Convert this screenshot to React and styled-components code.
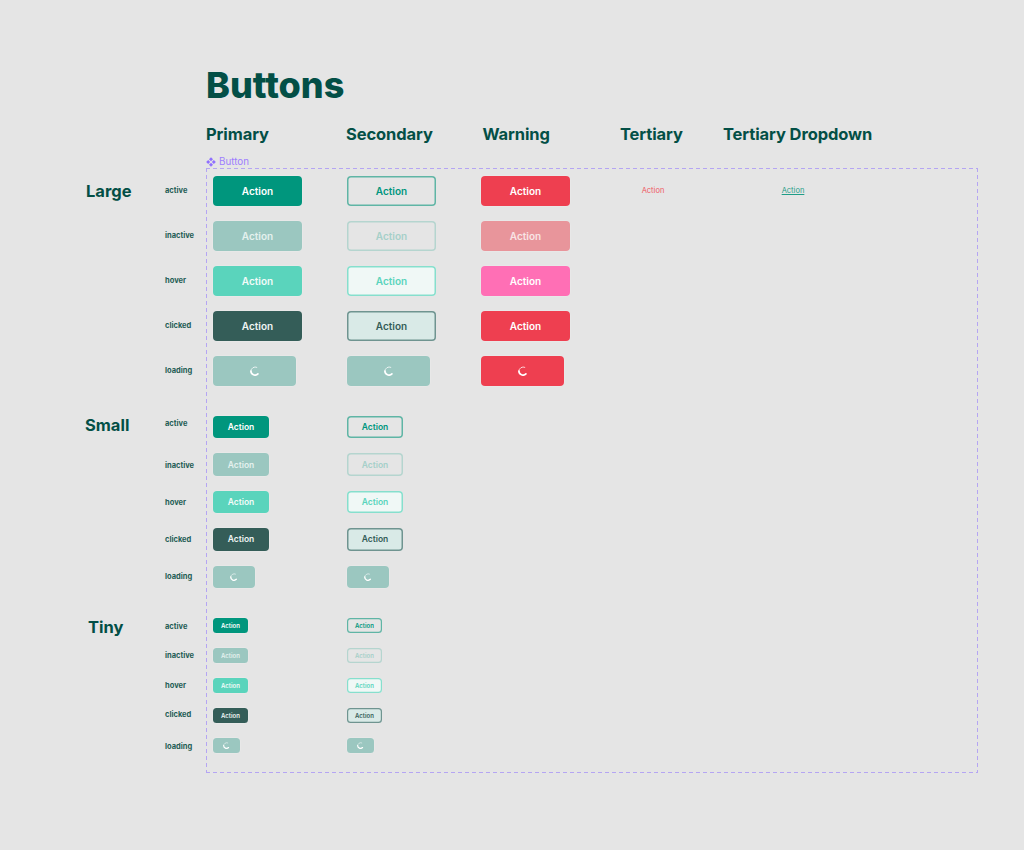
import React from 'react';
import styled, { createGlobalStyle } from 'styled-components';

const GlobalStyle = createGlobalStyle`
  html, body {
    margin: 0;
    padding: 0;
    background: #e5e5e5;
  }
`;

const sizes = {
  large: { height: 30, width: 89, loadingWidth: 83, font: 10, radius: 4, spinner: 10, line: 1.5 },
  small: { height: 22.4, width: 56, loadingWidth: 42, font: 8.5, radius: 4, spinner: 8, line: 1.5 },
  tiny: { height: 15, width: 35, loadingWidth: 27, font: 6, radius: 3.5, spinner: 7, line: 1.2 },
};

const skins = {
  primary: {
    active: { bg: '#00967d', text: '#fff' },
    inactive: { bg: '#9bc7c0', text: '#e4f1ee' },
    hover: { bg: '#5ad4bc', text: '#f2fbf9' },
    clicked: { bg: '#345d58', text: '#f0f5f4' },
    loading: { bg: '#9bc7c0', text: '#fff' },
  },
  secondary: {
    active: { bg: 'transparent', line: '#5fb5a5', text: '#00967d' },
    inactive: { bg: 'transparent', line: '#b5d5cf', text: '#a5d0c9' },
    hover: { bg: '#f0f8f6', line: '#86dfcd', text: '#5ad4bc' },
    clicked: { bg: '#d9eae7', line: '#6f9490', text: '#345d58' },
    loading: { bg: '#9bc7c0', text: '#fff' },
  },
  warning: {
    active: { bg: '#ee3f50', text: '#fff' },
    inactive: { bg: '#e8959b', text: '#f8e4e5' },
    hover: { bg: '#ff6fb5', text: '#fff' },
    clicked: { bg: '#ee3f50', text: '#fff' },
    loading: { bg: '#ee3f50', text: '#fff' },
  },
};

const Page = styled.div`
  width: 1024px;
  height: 850px;
  padding: 65px 0 0 85px;
  box-sizing: border-box;
  background: #e5e5e5;
  color: #034f46;
  font-family: Inter, "Liberation Sans", sans-serif;
  overflow: hidden;
`;

const Title = styled.h1`
  margin: 0 0 0 121px;
  height: 40px;
  font-size: 36px;
  line-height: 40px;
  font-weight: 800;
`;

const Columns = styled.div`
  display: flex;
  margin: 19px 0 0 121px;
  height: 20px;
`;

const ColumnTitle = styled.h2`
  margin: 0;
  width: ${p => p.$width}px;
  flex: none;
  font-size: 16.5px;
  line-height: 20px;
  font-weight: 700;
  letter-spacing: -0.1px;
  white-space: nowrap;
`;

const FrameLabel = styled.div`
  display: flex;
  align-items: center;
  gap: 3px;
  margin: 11px 0 0 121px;
  height: 13px;
  color: #9d7dff;
  font-size: 9.8px;
  line-height: 13px;
`;

const Board = styled.div`
  display: flex;
`;

const Sidebar = styled.div`
  width: 121px;
  flex: none;
  padding-top: 8px;
  display: flex;
  flex-direction: column;
  gap: 30px;
`;

const SideGroup = styled.div`
  display: flex;
`;

const SizeName = styled.div`
  width: 80px;
  flex: none;
  box-sizing: border-box;
  padding-left: ${p => p.$inset}px;
  height: ${p => p.$height}px;
  line-height: ${p => p.$height}px;
  font-size: 16.5px;
  font-weight: 700;
  transform: translateY(${p => p.$nudge}px);
`;

const StateList = styled.div`
  display: flex;
  flex-direction: column;
  gap: 15px;
`;

const StateName = styled.div`
  height: ${p => p.$height}px;
  line-height: ${p => p.$height}px;
  font-size: 7.5px;
  font-weight: 700;
  color: #1f5d55;
  transform: translateY(${p => p.$nudge}px);
`;

// css dashed gives dashes too short at 1px, so the four sides are gradients
const dash = 'repeating-linear-gradient';
const Frame = styled.div`
  width: 772px;
  height: 605px;
  flex: none;
  box-sizing: border-box;
  padding: 8px 0 0 7px;
  background:
    ${dash}(90deg, #b5a5f3 0 4px, transparent 4px 7px) top left / 100% 1px no-repeat,
    ${dash}(90deg, #b5a5f3 0 4px, transparent 4px 7px) bottom left / 100% 1px no-repeat,
    ${dash}(180deg, #b5a5f3 0 4px, transparent 4px 7px) top left / 1px 100% no-repeat,
    ${dash}(180deg, #b5a5f3 0 4px, transparent 4px 7px) top right / 1px 100% no-repeat;
  display: flex;
  flex-direction: column;
  gap: 30px;
`;

const Group = styled.div`
  display: flex;
  flex-direction: column;
  gap: 15px;
`;

const Row = styled.div`
  display: grid;
  grid-template-columns: 134px 134px 128px 88px 192px;
  align-items: center;
`;

const ringOf = p => {
  const line = skins[p.$kind][p.$state].line;
  return line
    ? `inset 0 0 0 ${sizes[p.$size].line}px ${line}`
    : '0 0 0 .5px rgba(255,255,255,.25)';
};

const Button = styled.div`
  box-sizing: border-box;
  display: flex;
  align-items: center;
  justify-content: center;
  height: ${p => sizes[p.$size].height}px;
  width: ${p => (p.$state === 'loading' ? sizes[p.$size].loadingWidth : sizes[p.$size].width)}px;
  border-radius: ${p => sizes[p.$size].radius}px;
  box-shadow: ${ringOf};
  background: ${p => skins[p.$kind][p.$state].bg};
  color: ${p => skins[p.$kind][p.$state].text};
  font-size: ${p => sizes[p.$size].font}px;
  font-weight: 600;
`;

const TextAction = styled.a`
  justify-self: center;
  font-size: 7.5px;
  line-height: 10px;
  color: ${p => p.$color};
  text-decoration: ${p => (p.$underline ? 'underline' : 'none')};
`;

const ComponentIcon = () => (
  <svg width="10" height="10" viewBox="0 0 10 10" fill="#8f6fff">
    <path d="M5 .2 7 2.2 5 4.2 3 2.2Z" />
    <path d="M5 5.8 7 7.8 5 9.8 3 7.8Z" />
    <path d="M2.2 3 4.2 5 2.2 7 .2 5Z" />
    <path d="M7.8 3 9.8 5 7.8 7 5.8 5Z" />
  </svg>
);

const Spinner = ({ size }) => (
  <svg width={size} height={size} viewBox="0 0 10 10" fill="none" stroke="#fff" strokeLinecap="round">
    <path d="M.9 5A4.1 4.1 0 0 0 7.9 7.9" strokeWidth="1.7" />
    <path d="M6.8 1.3A4.1 4.1 0 0 0 .9 5" strokeWidth="1" strokeOpacity=".75" />
  </svg>
);

const states = ['active', 'inactive', 'hover', 'clicked', 'loading'];

const groups = [
  { size: 'large', name: 'Large', inset: 1, nameNudge: 0, kinds: ['primary', 'secondary', 'warning'], nudges: [0, 0, 0, 0, 0] },
  { size: 'small', name: 'Small', inset: 0, nameNudge: -2, kinds: ['primary', 'secondary'], nudges: [-3, 2, 1, 1, 0] },
  { size: 'tiny', name: 'Tiny', inset: 3, nameNudge: 2, kinds: ['primary', 'secondary'], nudges: [1, 0, 0, -1, 1] },
];

const columnTitles = [
  ['Primary', 140],
  ['Secondary', 136.5],
  ['Warning', 137.5],
  ['Tertiary', 103],
  ['Tertiary Dropdown', 160],
];

export default function App() {
  return (
    <Page>
      <GlobalStyle />
      <Title>Buttons</Title>
      <Columns>
        {columnTitles.map(([label, width]) => (
          <ColumnTitle key={label} $width={width}>{label}</ColumnTitle>
        ))}
      </Columns>
      <FrameLabel>
        <ComponentIcon />
        Button
      </FrameLabel>
      <Board>
        <Sidebar>
          {groups.map(g => (
            <SideGroup key={g.size}>
              <SizeName $height={sizes[g.size].height} $inset={g.inset} $nudge={g.nameNudge}>{g.name}</SizeName>
              <StateList>
                {states.map((s, i) => (
                  <StateName key={s} $height={sizes[g.size].height} $nudge={g.nudges[i]}>{s}</StateName>
                ))}
              </StateList>
            </SideGroup>
          ))}
        </Sidebar>
        <Frame>
          {groups.map(g => (
            <Group key={g.size}>
              {states.map(s => (
                <Row key={s}>
                  {g.kinds.map(kind => (
                    <Button key={kind} $size={g.size} $kind={kind} $state={s}>
                      {s === 'loading' ? <Spinner size={sizes[g.size].spinner} /> : 'Action'}
                    </Button>
                  ))}
                  {g.size === 'large' && s === 'active' && (
                    <>
                      <TextAction $color="#ef5561">Action</TextAction>
                      <TextAction $color="#1f9d87" $underline>Action</TextAction>
                    </>
                  )}
                </Row>
              ))}
            </Group>
          ))}
        </Frame>
      </Board>
    </Page>
  );
}
